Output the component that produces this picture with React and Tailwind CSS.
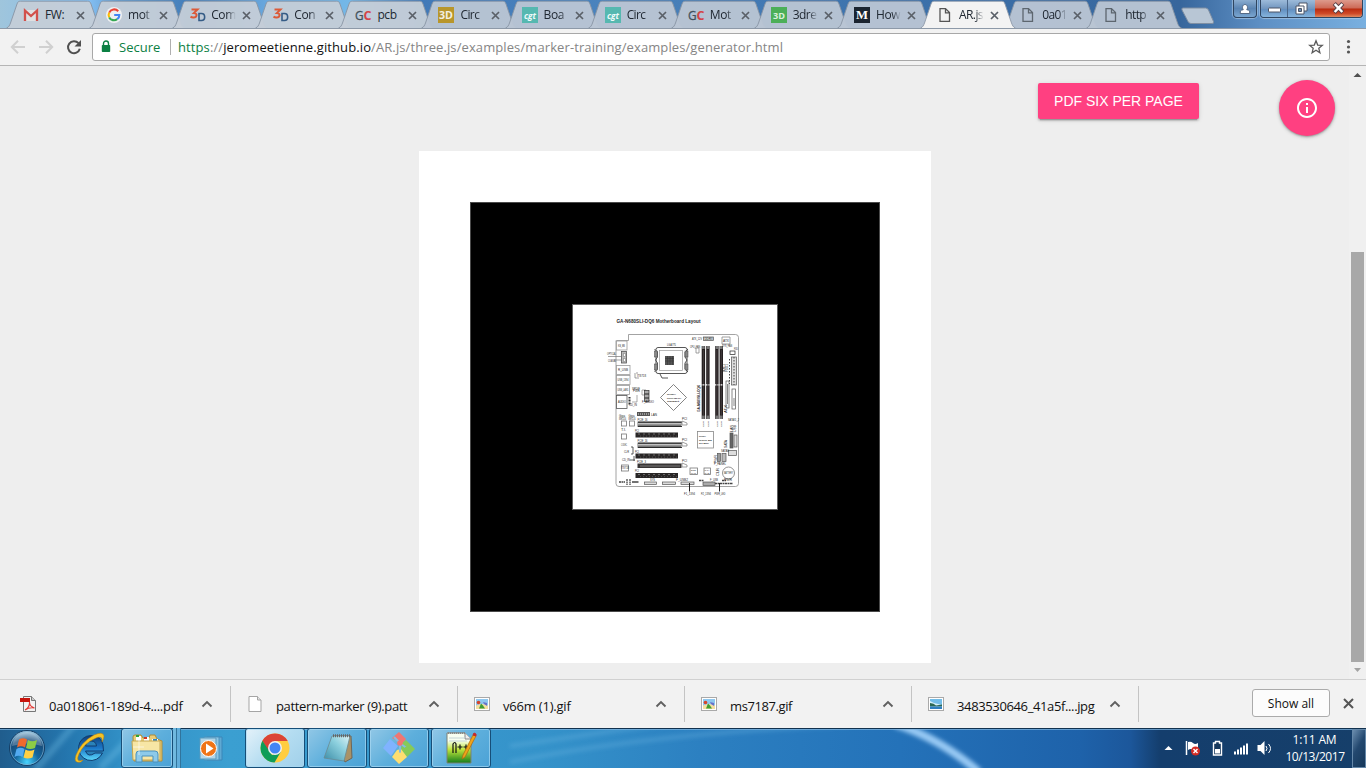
import React from "react";

const ui = "font-['Open_Sans','Noto_Sans',sans-serif]";

const Close = ({ c = "#5a6068" }) => (
  <svg width="9" height="9" viewBox="0 0 9 9" className="shrink-0">
    <path d="M1 1l7 7M8 1l-7 7" stroke={c} strokeWidth="1.7" />
  </svg>
);

const Square = ({ bg, fg, children, size = 10, font = "Open Sans", style, w = 14 }) => (
  <svg width="16" height="16" viewBox="0 0 16 16">
    <rect width="16" height="16" fill={bg} />
    <text x="8" y={size > 11 ? 12.4 : 11.6} textAnchor="middle" fill={fg} fontSize={size} fontWeight="700" fontFamily={font} fontStyle={style} textLength={w} lengthAdjust="spacingAndGlyphs">{children}</text>
  </svg>
);

const Doc = ({ c }) => (
  <svg width="16" height="16" viewBox="0 0 16 16">
    <path d="M3 1.6h5.500l4 4v8.800H3zM8.500 1.800v4h4" fill="none" stroke={c} strokeWidth="1.3" />
  </svg>
);

const Gmail = () => (
  <svg width="16" height="16" viewBox="0 0 16 16">
    <path d="M1 3h14v11H1z" fill="#dfe0e2" />
    <path d="M2 14V3.500l6 5.500 6-5.500V14" fill="none" stroke="#d2504b" strokeWidth="2.3" />
  </svg>
);

const Google = () => (
  <svg width="16" height="16" viewBox="0 0 16 16">
    <circle cx="8" cy="8" r="8" fill="#eef0f2" />
    <path d="M12.2 4.2A5.400 5.400 0 0 0 3.200 5.600" fill="none" stroke="#ea4335" strokeWidth="2.1" />
    <path d="M3.200 5.600a5.400 5.400 0 0 0 0 4.800" fill="none" stroke="#fbbc05" strokeWidth="2.1" />
    <path d="M3.200 10.400a5.400 5.400 0 0 0 8 1.800" fill="none" stroke="#34a853" strokeWidth="2.1" />
    <path d="M11.200 12.200A5 5 0 0 0 13.300 8H8.200" fill="none" stroke="#4285f4" strokeWidth="2.1" />
  </svg>
);

const ThreeD = () => (
  <svg width="17" height="16" viewBox="0 0 17 16">
    <path d="M2.500 2.500h6L4.900 6.100c4 .2 3.200 4.500-.6 4.300-1.200 0-2.200-.3-2.800-.7" fill="none" stroke="#db5a38" strokeWidth="2" />
    <path d="M10 6.500h2.500c4.200 0 4.200 7 0 7H10z" fill="none" stroke="#355c86" strokeWidth="1.600" />
  </svg>
);

const GC = () => (
  <svg width="17" height="16" viewBox="0 0 17 16">
    <text x="0" y="12.600" fontSize="12" fontFamily="Open Sans" fontWeight="400" fill="#42515b" stroke="#42515b" strokeWidth=".3" textLength="8.600" lengthAdjust="spacingAndGlyphs">G</text>
    <text x="8.600" y="12.600" fontSize="12" fontFamily="Open Sans" fontWeight="700" fill="#d34448" textLength="8" lengthAdjust="spacingAndGlyphs">C</text>
  </svg>
);

const tabs = [
  ["FW:", <Gmail />],
  ["mot", <Google />],
  ["Com", <ThreeD />],
  ["Con", <ThreeD />],
  ["pcb", <GC />],
  ["Circ", <Square bg="#b8962b" fg="#f3efe0">3D</Square>],
  ["Boa", <Square bg="#56b8b0" fg="#eefafa" style="italic" size={8} w={12}>cgt</Square>],
  ["Circ", <Square bg="#56b8b0" fg="#eefafa" style="italic" size={8} w={12}>cgt</Square>],
  ["Mot", <GC />],
  ["3dre", <Square bg="#4caf58" fg="#d9f0dc" w={12} size={9}>3D</Square>],
  ["How", <Square bg="#1b2430" fg="#ffffff" font="Liberation Serif" size={13} w={12}>M</Square>],
  ["AR.js", <Doc c="#555555" />],
  ["0a01", <Doc c="#5d666f" />],
  ["http", <Doc c="#5d666f" />],
];

function Tab({ label, icon, active, i }) {
  return (
    <div className={`relative h-[28px] w-[83.1px] shrink-0 ${active ? "z-10" : ""}`}>
      <svg className="absolute left-0 top-0" width="98" height="28" viewBox="0 0 98 28">
        <path
          d="M0.5 28C3 27 3.5 25.500 4.500 23L11 4C11.800 1.800 12.500 1.200 14.500 1.200H81.500C83.500 1.200 84.200 1.800 85 4L91.500 23C92.500 25.500 93 27 95.500 28Z"
          fill={active ? "#f3f3f3" : i < 5 ? "#c4cdd7" : "#b9c5d3"}
          fillOpacity={active ? 1 : 0.96}
        />
        <path
          d="M0.5 28C3 27 3.5 25.500 4.500 23L11 4C11.800 1.800 12.500 1.200 14.500 1.200H81.500C83.500 1.200 84.200 1.800 85 4L91.500 23C92.500 25.500 93 27 95.500 28"
          fill="none"
          stroke={active ? "#8d99a8" : "#8894a4"}
          strokeWidth="0.9"
        />
      </svg>
      <div className="relative flex h-[28px] items-center pl-[17px] pt-[2px]">
        <span className="w-[17px] shrink-0">{icon}</span>
        <span className={`${ui} ml-[5px] w-[27px] shrink-0 whitespace-nowrap text-[12px] leading-[18px] text-[#202832] ${label.length > 3 ? "tracking-[-0.6px]" : "tracking-[-0.4px]"} ${i === 0 || i === 4 ? "" : "[mask-image:linear-gradient(90deg,#000_60%,transparent_92%)]"}`}>
          {label}
        </span>
        <span className="ml-[4px] flex">
          <Close />
        </span>
      </div>
    </div>
  );
}

function TabStrip() {
  return (
    <div className="relative flex h-[28px] w-full items-start overflow-hidden bg-[linear-gradient(90deg,#9fc5dc_0,#82bdf0_90px,#5f9bd1_120px,#437db9_190px,#6aa9df_270px,#74b8e8_350px,#4179b8_420px,#4a83bd_600px,#3c71ab_900px,#37669c_1180px,#5d8fc4_1260px,#79b0e0_1366px)]">
      <div className="flex pl-[6px]">
        {tabs.map(([label, icon], i) => (
          <Tab key={i} i={i} label={label} icon={icon} active={i === 11} />
        ))}
      </div>
      <svg className="mt-[7px] ml-[11px] shrink-0" width="36" height="18" viewBox="0 0 36 18">
        <path d="M3 1h22.500q2 0 3 2l5 11.500q.8 2-1.500 2H11q-2 0-3-2L2 3Q1.300 1 3 1z" fill="#b8c6d5" stroke="#7f8fa3" />
      </svg>
      <div className="ml-auto mr-[3px] flex gap-[3px]">
        <div className="flex h-[18px] w-[24px] items-center justify-center rounded-b-[4px] border border-t-0 border-[#30455f] bg-[linear-gradient(#8badd0,#5a84b3_50%,#7aa6d0)] shadow-[0_0_1px_1px_#b9d3ec99]">
          <svg width="12" height="12" viewBox="0 0 12 12">
            <path d="M1.300 10.500V8Q2 7 4.300 6.700C2.800 5 3.500 1.500 6 1.500S9.200 5 7.700 6.700Q10 7 10.700 8v2.500z" fill="#fff" stroke="#4c5f7a" strokeWidth=".9" />
          </svg>
        </div>
        <div className="flex h-[18px] overflow-hidden rounded-b-[4px] border border-t-0 border-[#30455f] shadow-[0_0_1px_1px_#b9d3ec99]">
          <div className="flex w-[27px] items-center justify-center border-r border-[#4a6689] bg-[linear-gradient(#9dbbda,#7196bf_50%,#628fc0_55%,#86b4dd)]">
            <svg width="13" height="6" viewBox="0 0 13 6" className="mt-[3px]"><rect x=".5" y="1" width="12" height="4" rx=".8" fill="#fff" stroke="#4c5566" /></svg>
          </div>
          <div className="flex w-[27px] items-center justify-center bg-[linear-gradient(#9dbbda,#7196bf_50%,#628fc0_55%,#86b4dd)]">
            <svg width="13" height="13" viewBox="0 0 13 13">
              <path d="M4 1h8v8H4z" fill="#fff" stroke="#4c5566" /><path d="M1 4h8v8H1z" fill="#fff" stroke="#4c5566" /><path d="M3.500 6.500h3v3h-3z" fill="#6a8fb9" stroke="#4c5566" />
            </svg>
          </div>
          <div className="flex w-[47px] items-center justify-center bg-[linear-gradient(#dd9a8c,#cd6956_48%,#b92b10_52%,#cf4a28_80%,#e08a60)]">
            <svg width="13" height="12" viewBox="0 0 13 12" className="-mt-px">
              <path d="M2.200 1.500l8.600 9M10.800 1.500l-8.600 9" stroke="#5b4349" strokeWidth="4.300" /><path d="M2.700 2l7.600 8M10.300 2l-7.600 8" stroke="#fff" strokeWidth="2.500" />
            </svg>
          </div>
        </div>
      </div>
    </div>
  );
}

function Toolbar() {
  return (
    <div className="flex h-[38px] w-full items-center border-b border-[#b5b5b5] border-t border-t-[#8d99a8] bg-[#f2f2f2]">
      <svg width="92" height="36" viewBox="0 0 92 36" className="shrink-0">
        <g fill="none" stroke="#d0d0d0" strokeWidth="2">
          <path d="M25 18H12.500M18 11.800L11.800 18l6.200 6.200M39 18h12.500M46 11.800l6.200 6.200-6.200 6.200" />
        </g>
        <path d="M78.500 14.200A6 6 0 1 0 79.800 19.800" fill="none" stroke="#505050" strokeWidth="2" />
        <path d="M81 11v6.500h-6.500z" fill="#505050" />
      </svg>
      <div className={`${ui} flex h-[28px] w-[1238px] items-center rounded-[3px] border border-[#a8a8a8] bg-white text-[13px] leading-[18px]`}>
        <svg width="10" height="13" viewBox="0 0 10 13" className="ml-[8px] mb-[1px]">
          <path d="M2.500 6V3.500a2.500 2.500 0 0 1 5 0V6" fill="none" stroke="#0b8043" strokeWidth="1.400" /><rect x=".8" y="5" width="8.400" height="7" rx=".8" fill="#0b8043" />
        </svg>
        <span className="ml-[8px] w-[42px] whitespace-nowrap tracking-[0px] text-[#0b8043]">Secure</span>
        <span className="ml-[9px] h-[16px] w-px bg-[#b0b0b0]" />
        <span className="ml-[7px] whitespace-nowrap tracking-[0.1px] text-[#858585]">
          <span className="text-[#0b8043]">https</span>://<span className="text-[#111111]">jeromeetienne.github.io</span>/AR.js/three.js/examples/marker-training/examples/generator.html
        </span>
        <svg width="16" height="16" viewBox="0 0 16 16" className="ml-auto mr-[5px]">
          <path d="M8 1.800l1.700 4.300 4.600.3-3.500 2.900 1.100 4.500L8 11.300l-3.900 2.500 1.100-4.500L1.700 6.400l4.600-.3z" fill="none" stroke="#5a5a5a" strokeWidth="1.300" />
        </svg>
      </div>
      <svg width="36" height="20" viewBox="0 0 36 20"><g fill="#555"><circle cx="18.500" cy="4.500" r="1.600" /><circle cx="18.500" cy="10" r="1.600" /><circle cx="18.500" cy="15" r="1.600" /></g></svg>
    </div>
  );
}

const T = ({ x, y, w, children, s = 2.6, r, b }) => (
  <text x={x} y={y} fontSize={s} textLength={w} lengthAdjust="spacingAndGlyphs" fontFamily="Liberation Sans" fontWeight={b ? 700 : 400} fill="#222" transform={r ? `rotate(-90 ${x} ${y})` : undefined}>{children}</text>
);

function Board() {
  return (
    <svg width="206" height="206" viewBox="572 304 206 206" className="block bg-white">
      <rect x="572.500" y="304.500" width="205" height="205" fill="#fff" stroke="#5c5c5c" />
      <T x={616.500} y={323} w={84} s={5.200} b>GA-N680SLI-DQ6 Motherboard Layout</T>
      <path d="M616.500 340.500h12v-6h107q3 0 3 3v146q0 3-3 3H619q-3 0-3-3V340.500" fill="none" stroke="#8c8c8c" strokeWidth=".8" />
      <g fill="#fff" stroke="#999" strokeWidth=".8">
        <rect x="616.500" y="341" width="10.500" height="9" />
        <rect x="616.500" y="365.500" width="13.500" height="9" /><rect x="616.500" y="375.500" width="13.500" height="9" />
        <rect x="616.500" y="385.500" width="13" height="9" /><rect x="616.500" y="395.500" width="10.500" height="13" stroke="#555" />
        <rect x="621.500" y="351.500" width="5" height="11.500" fill="#bbb" stroke="#555" />
        <rect x="623.500" y="353.500" width="2" height="3" /><rect x="623.500" y="358.500" width="2" height="3" />
      </g>
      <T x={618} y={346.500} w={7}>KB_MS</T><T x={607} y={355} w={9}>OPTICAL</T><T x={608} y={362} w={8}>COAXIAL</T>
      <T x={618} y={371} w={10}>R_USB</T><T x={617.500} y={381} w={11}>USB_1394</T><T x={617.500} y={391} w={11}>USB_LAN1</T><T x={618} y={403} w={8}>AUDIO</T>
      <path d="M608 356.500h13M614 360h7M635 373v5h4M636 373h2" stroke="#777" strokeWidth=".7" fill="none" />
      <T x={637} y={377} w={9}>IT8718</T>
      <g fill="none" stroke="#444" strokeWidth=".9">
        <rect x="656" y="347.500" width="31" height="26" rx="2" /><rect x="659.500" y="350.500" width="23" height="20" stroke="#999" strokeWidth=".7" />
        <path d="M654.500 349l3 3v5l-2 3 2 3v6l-3 3M688 349l-3 3v5l2 3-2 3v6l3 3M660 374l2 4h6" />
      </g>
      <g fill="#888" stroke="#444" strokeWidth=".5"><rect x="654.500" y="351" width="3" height="6" /><rect x="654.500" y="364" width="3" height="6" /><rect x="685" y="351" width="3" height="6" /><rect x="685" y="364" width="3" height="6" /></g>
      <rect x="665" y="356" width="9" height="9" fill="#555" /><path d="M665 358.500h9M665 361h9M667.500 356v9M670 356v9M672.500 356v9" stroke="#333" strokeWidth=".5" />
      <T x={667} y={346} w={9}>LGA775</T><T x={692} y={339.500} w={10}>ATX_12V</T><rect x="703.500" y="337" width="10" height="3.500" fill="#ddd" stroke="#555" strokeWidth=".7" />
      <T x={704.500} y={340} w={8}>DDRII</T><T x={690} y={347.500} w={10}>CPU_FAN</T>
      <path d="M696 348v5h3v-5h-4M722 337h8v7h-8z" fill="none" stroke="#888" strokeWidth=".8" />
      <T x={723} y={341.500} w={6}>ATX</T><T x={734} y={350} w={4}>FDD</T>
      {[701.7, 706.2, 715.2, 719.6].map((x) => (
        <g key={x}>
          <rect x={x} y="346" width="3.400" height="73" fill="#241f20" />
          <path d={`M${x + 1.700} 350v65`} stroke="#665f60" strokeWidth=".5" />
          <path d={`M${x - .2} 384.800h3.800`} stroke="#fff" strokeWidth="1.200" strokeDasharray="1 .6" />
          <rect x={x + .4} y="346" width="2.600" height="3" fill="#777" /><rect x={x + .4} y="415.500" width="2.600" height="3.500" fill="#777" />
          <T x={x + 2.500} y={427} w={6} s={2.500} r>DDR</T>
        </g>
      ))}
      <T x={699.500} y={412} w={27} s={4.200} r b>GA-N680SLI-DQ6</T>
      <path d="M660.500 397.500L673.500 384.500 686.500 397.500 673.500 410.500z" fill="#fff" stroke="#666" strokeWidth=".8" />
      <T x={667} y={395} w={9} b s={2.200}>NVIDIA</T><T x={667} y={398.800} w={14} b s={2.200}>nForce 680i SLI</T><T x={667} y={402} w={12} b s={2.200}>Chipset</T>
      <rect x="697.500" y="431.500" width="16" height="16.500" fill="#fff" stroke="#888" strokeWidth=".8" />
      <T x={699} y={437} w={7} b s={2.200}>NVIDIA</T><T x={699} y={440.500} w={13} b s={2.200}>nForce 590</T><T x={699} y={444} w={10} b s={2.200}>SLI MCP</T>
      <T x={633} y={392} w={7}>PWR</T><path d="M632 402h5v-7M642 390h4v5h-4z" fill="none" stroke="#888" strokeWidth=".7" />
      <rect x="644.500" y="390.500" width="4.500" height="11" fill="#aaa" stroke="#333" strokeWidth=".7" /><path d="M644.500 394h4.500M644.500 398h4.500" stroke="#222" />
      <T x={642} y={403} w={12}>F_AUDIO</T><T x={632} y={390} w={8}>SPDIF</T><path d="M629.500 397v8" stroke="#333" strokeWidth="2" strokeDasharray="1 .5" /><T x={629} y={406} w={8}>CD_IN</T>
      <rect x="637" y="412" width="13" height="4" fill="#555" /><path d="M638 414h11" stroke="#ddd" strokeDasharray="1 1" /><T x={651} y={415.500} w={6}>LAN</T>
      {[420, 441].map((y) => (
        <g key={y}>
          <T x={637.500} y={y + .8} w={10}>PCIE_16</T>
          <rect x="637.500" y={y + 1.500} width="44" height="5.500" fill="#777" /><path d={`M638 ${y + 3.800}h43`} stroke="#e2e2e2" strokeWidth="1" /><path d={`M638 ${y + 2.200}h44M638 ${y + 6.500}h44`} stroke="#222" strokeWidth=".9" />
          <path d={`M682 ${y + 1}l5 2v2h-5z`} fill="none" stroke="#777" strokeWidth=".7" /><T x={682} y={y} w={5}>PCI</T>
        </g>
      ))}
      {[432.500, 453.500, 473].map((y) => (
        <g key={y}><T x={635} y={y - 1} w={4}>PCI</T><rect x="635.500" y={y} width="42.500" height="5" fill="#292626" /><path d={`M638 ${y + 1.500}h39`} stroke="#999" strokeWidth=".6" strokeDasharray="2 3" /><path d={`M640 ${y + 3.600}h37`} stroke="#777" strokeWidth=".5" strokeDasharray="1 2" /></g>
      ))}
      <rect x="637.500" y="463.500" width="44" height="4.500" fill="#383535" /><path d="M640 466h40" stroke="#aaa" strokeWidth=".6" /><path d="M682 463l5 2v2h-5z" fill="none" stroke="#777" strokeWidth=".7" />
      <T x={637} y={462.500} w={9}>PCIE_3</T><T x={682} y={462} w={5}>PCI</T>
      <g fill="#fff" stroke="#777" strokeWidth=".8"><rect x="621.500" y="421" width="5" height="5" /><rect x="629.500" y="421" width="5" height="5" /><rect x="621.500" y="434" width="5" height="5" /><rect x="621.500" y="465" width="7" height="6" /><rect x="690" y="468" width="7.500" height="6.500" /><rect x="704" y="468" width="6.500" height="6.500" /><circle cx="728.500" cy="473" r="6" /></g>
      <T x={619} y={417} w={6}>Giga</T><T x={619} y={419.700} w={7}>88E1116</T><T x={628.500} y={417} w={6}>Giga</T><T x={628.500} y={419.700} w={7}>88E1116</T>
      <T x={621} y={431} w={5}>T.I.</T><T x={621} y={446} w={6}>CODEC</T><T x={624} y={453} w={5}>CLR</T><T x={622} y={461} w={8}>CD_IN</T><T x={621} y={469} w={8}>IT8718</T>
      <path d="M631 447h2v7h-2M630 460h5M634 456v5" stroke="#333" strokeWidth=".8" fill="none" />
      <T x={691} y={471} w={5} s={2}>BIOS</T><T x={691} y={473.800} w={5} s={2}>MAIN</T><T x={704.500} y={471} w={5} s={2}>SATA</T><T x={704.500} y={473.800} w={5} s={2}>RAID</T><T x={724} y={474} w={9}>BATTERY</T>
      <g fill="#ddd" stroke="#555" strokeWidth=".7">
        <rect x="731.500" y="357" width="5" height="28" /><rect x="726" y="381" width="3" height="27" fill="#fff" /><rect x="732" y="389" width="3.500" height="20" fill="#fff" />
        <rect x="730" y="351" width="5" height="3.500" fill="#fff" stroke="#222" /><rect x="730" y="433" width="3" height="15" fill="#666" /><rect x="734" y="435" width="3" height="12" />
        <rect x="728.500" y="450.500" width="8" height="5" /><rect x="717.500" y="453.500" width="3" height="8" fill="#999" /><rect x="722" y="453.500" width="4" height="8" fill="#bbb" />
        <rect x="644.500" y="482" width="12" height="2.500" /><rect x="662.500" y="482" width="13" height="2.500" /><rect x="681" y="482" width="13" height="2.500" /><rect x="703" y="482" width="12" height="3.500" fill="#aaa" />
      </g>
      <path d="M729.500 359v25M734 357v28" stroke="#444" strokeWidth="1" strokeDasharray="1.500 1.500" />
      <path d="M727.500 384v20M734 398v8" stroke="#555" strokeWidth=".7" />
      <g><T x={725} y={372} w={8} r>IDE1</T><T x={728} y={372} w={8} r>FDD1</T><T x={727} y={413} w={8} r>ATX</T><T x={727} y={448} w={8} r>SATA</T><T x={736} y={432} w={7} r>USB</T><T x={733} y={432} w={7} r>LAN</T><T x={717} y={463} w={8} r>PWR</T><T x={719} y={476} w={8} r>CLR</T></g>
      <T x={721} y={452} w={8}>SATAII</T><T x={728} y={421} w={11}>SATAII1_2</T><T x={722} y={347} w={10}>SYS_FAN</T><T x={714} y={465} w={12}>F_PANEL</T>
      <path d="M619 482h6M632 482h6M627 479v6M630 479v6M634 482h5M699 480.500h5M715 483.500h18M722 480.500h4" stroke="#444" strokeWidth="1.300" strokeDasharray="2 .5" />
      <T x={676} y={481} w={12}>F_USB2</T><T x={710} y={481} w={8}>F_USB</T><T x={650} y={480.500} w={5}>SYS</T><T x={724} y={481} w={8}>PWR</T>
      <path d="M689.500 483v8.500M719.500 483v8.500" stroke="#222" strokeWidth="1" />
      <T x={684} y={494.500} w={11}>F1_1394</T><T x={701} y={494.500} w={10}>F2_1394</T><T x={714.500} y={494.500} w={11}>PWR_LED</T>
    </svg>
  );
}

function Content() {
  return (
    <div className="flex h-[613px] w-full bg-[#eeeeee]">
      <div className="flex w-[419px] shrink-0" />
      <div className="mt-[85px] flex h-[512px] w-[512px] shrink-0 items-center justify-center bg-white">
        <div className="flex h-[410px] w-[410px] items-center justify-center border border-[#4a4a4a] bg-black">
          <Board />
        </div>
      </div>
      <div className="flex flex-1 items-start">
        <button className="ml-[107px] mt-[17px] h-[36px] w-[161px] rounded-[2px] bg-[#ff4081] font-['Liberation_Sans',sans-serif] text-[14px] leading-[36px] text-white shadow-[0_2px_2px_0_rgba(0,0,0,.14),0_3px_1px_-2px_rgba(0,0,0,.2),0_1px_5px_0_rgba(0,0,0,.12)]">PDF SIX PER PAGE</button>
        <button className="ml-[80px] mt-[14px] flex h-[56px] w-[56px] items-center justify-center rounded-full bg-[#ff4081] shadow-[0_1px_2px_rgba(0,0,0,.25),0_1px_4px_rgba(0,0,0,.2)]">
          <svg width="24" height="24" viewBox="0 0 24 24" fill="#fff"><path d="M11 17h2v-6h-2v6zm1-15C6.480 2 2 6.480 2 12s4.480 10 10 10 10-4.480 10-10S17.520 2 12 2zm0 18c-4.410 0-8-3.590-8-8s3.590-8 8-8 8 3.590 8 8-3.590 8-8 8zM11 9h2V7h-2v2z" /></svg>
        </button>
      </div>
      <div className="flex h-full w-[17px] shrink-0 flex-col items-center bg-[#f0f0f0]">
        <svg width="17" height="17" viewBox="0 0 17 17"><path d="M4.500 11L8.500 7l4 4z" fill="#505050" /></svg>
        <div className="mt-[169px] h-[410px] w-[13px] bg-[#a8a8a8]" />
        <svg width="17" height="17" viewBox="0 0 17 17"><path d="M5 6l3.500 4L12 6z" fill="#a3a3a3" /></svg>
      </div>
    </div>
  );
}

const GifIcon = () => (
  <svg width="16" height="16" viewBox="0 0 16 16"><rect x=".5" y="1.500" width="15" height="13" fill="#fff" stroke="#a9a9a9" /><rect x="2" y="3" width="12" height="10" fill="#8ec7ef" /><path d="M2 9.500q6-3 12 0V13H2z" fill="#f5dfa0" /><path d="M5 12.500l2-5 2 2 2 3z" fill="#3f9d32" /><circle cx="4.500" cy="6.500" r="1.800" fill="#d6452a" /><path d="M9 6l4 1v3l-3-2z" fill="#6a70c8" /></svg>
);
const JpgIcon = () => (
  <svg width="16" height="16" viewBox="0 0 16 16"><rect x=".5" y="1.500" width="15" height="13" fill="#fff" stroke="#a9a9a9" /><rect x="2" y="3" width="12" height="10" fill="#72bde8" /><path d="M2 5l4 2 8 2v2H2z" fill="#d6f0fa" /><path d="M2 7q4 0 6 2.500l6-1v2H2z" fill="#2c6853" /><path d="M2 10.500h12V13H2z" fill="#2f7fc0" /></svg>
);
const PdfIcon = () => (
  <svg width="16" height="16" viewBox="0 0 16 16"><path d="M3.500.5h8l4 4v11h-12z" fill="#f2f2f2" stroke="#777" /><path d="M11.500.5v4h4" fill="#ccc" stroke="#777" /><path d="M0 2h10v4H0z" fill="#c8140c" /><path d="M5 14q5-3 4.500-8 0 4.500 5 6-5-1-9.500 2" fill="none" stroke="#e23a35" strokeWidth="1.100" /></svg>
);
const FileIcon = () => (
  <svg width="16" height="16" viewBox="0 0 16 16"><path d="M2 .5h8.500l3.500 3.500v11.500H2z" fill="#fff" stroke="#a5a5a5" /><path d="M10.500.5V4H14" fill="#e4e4e4" stroke="#a5a5a5" /></svg>
);

const downloads = [
  ["0a018061-189d-4....pdf", <PdfIcon />, "w-[134px]", "tracking-[-0.26px]"],
  ["pattern-marker (9).patt", <FileIcon />, "w-[132px]", "tracking-[-0.36px]"],
  ["v66m (1).gif", <GifIcon />, "w-[69px]", "tracking-[-0.2px]"],
  ["ms7187.gif", <GifIcon />, "w-[63px]", "tracking-[-0.4px]"],
  ["3483530646_41a5f....jpg", <JpgIcon />, "w-[138px]", "tracking-[-0.37px]"],
];

function Downloads() {
  return (
    <div className={`${ui} flex h-[49px] w-full border-t border-[#d0d0d0] bg-[#f2f2f2] pt-[6px]`}>
      <div className="flex pl-[4px]">
        {downloads.map(([name, icon, w, track]) => (
          <div key={name} className="flex h-[36px] w-[227px] items-center border-r border-[#c4c4c4] pl-[16px]">
            <span className="mb-px flex w-[16px]">{icon}</span>
            <span className={`ml-[13px] whitespace-nowrap pt-[3px] text-[13px] leading-[18px] text-[#111] ${w} ${track}`}>{name}</span>
            <svg width="12" height="8" viewBox="0 0 12 8" className="ml-auto mr-[17px]"><path d="M1.500 6.500L6 2l4.500 4.500" fill="none" stroke="#606060" strokeWidth="1.900" /></svg>
          </div>
        ))}
      </div>
      <button className="ml-auto mt-[3px] h-[28px] w-[78px] rounded-[3px] border border-[#ababab] bg-[#fcfcfc] text-[12px] leading-[25px] text-[#111]">Show all</button>
      <svg width="11" height="11" viewBox="0 0 11 11" className="ml-[13px] mr-[12px] mt-[12px]"><path d="M1 1l9 9M10 1l-9 9" stroke="#555" strokeWidth="2" /></svg>
    </div>
  );
}

const Orb = () => (
  <svg width="38" height="38" viewBox="0 0 38 38">
    <defs><radialGradient id="orb" cx=".5" cy=".9" r=".85"><stop offset="0" stopColor="#46d4ff" /><stop offset=".4" stopColor="#14679f" /><stop offset=".75" stopColor="#174b79" /><stop offset="1" stopColor="#8ebad5" /></radialGradient></defs>
    <circle cx="19" cy="19" r="17.500" fill="url(#orb)" stroke="#153e65" /><circle cx="19" cy="19" r="16.500" fill="none" stroke="#8bbbd9" strokeOpacity=".6" />
    <path d="M4 17Q6 4 19 3q13 1 15 14-15-5-30 0z" fill="#fff" fillOpacity=".25" />
    <path d="M11 10.500q4-2.500 8 0l-2 8q-4-2.500-8 0z" fill="#ef6a2d" /><path d="M20 11q4 2.500 9 0l-2 8q-5 2-9 0z" fill="#8dcc45" />
    <path d="M8.500 20q4-2.500 8 0l-2 8q-4-2.500-8 0z" fill="#53aaf0" /><path d="M17.500 20.500q4 2.500 9 0l-2 8q-5 2-9 0z" fill="#ffd044" />
  </svg>
);
const IE = () => (
  <svg width="34" height="32" viewBox="0 0 34 32">
    <defs><linearGradient id="ie" x2="0" y2="1"><stop stopColor="#113f77" /><stop offset=".5" stopColor="#1b77c8" /><stop offset="1" stopColor="#5cd8fb" /></linearGradient></defs>
    <path d="M18 3.500a12.500 12.500 0 1 0 11.500 17.500h-7.500q-7 5-9.500-2H30.500Q31 3.500 18 3.500zm-5.500 10.500q1-5 5.500-5 5 0 5.500 5z" fill="url(#ie)" stroke="#103d70" />
    <path d="M8 30Q0 32 3 23 8 10 21 3q9-4 10 1 0 3-2 6 1-7-6-4Q11 11 6 22q-4 9 4 6z" fill="#f6c324" stroke="#b77d10" strokeWidth=".5" />
  </svg>
);
const Explorer = () => (
  <svg width="34" height="32" viewBox="0 0 34 32">
    <path d="M3 5q0-2 2-2h6l2 3h6l1-3h5l2 4 5 2v20H4z" fill="#e9cd79" stroke="#ad8c38" /><path d="M6 4h5v5H6zM14 5h5v5h-5zM22 7h6v4h-6z" fill="#fff" /><path d="M6 3h3v2H6z" fill="#2aa338" /><path d="M14 5h3v2h-3z" fill="#d13624" /><path d="M23 7h4v2h-4z" fill="#2c87c9" />
    <path d="M2 9h28v19H3z" fill="#f7e6a5" stroke="#c5a650" /><path d="M6 30v-8q0-3 3-3h16q3 0 3 3v8h-5v-6H12v6z" fill="#8dcaea" stroke="#4b91bd" /><path d="M9 8v15M3 15h11" stroke="#fff" strokeOpacity=".6" />
  </svg>
);
const Media = () => (
  <svg width="28" height="27" viewBox="0 0 28 27"><path d="M9 2h15v23H9z" fill="#5fa9d3" stroke="#3b86b8" /><path d="M6 2h15v23H6z" fill="#8cc6e6" stroke="#4b92bd" /><path d="M2 3h16v21H2z" fill="#b3d6e8" stroke="#5799be" /><circle cx="10.500" cy="13.500" r="8" fill="#ef7417" stroke="#fff" /><path d="M8 8.500v10l7.500-5z" fill="#fff" /></svg>
);
const Chrome = () => (
  <svg width="30" height="30" viewBox="0 0 30 30"><circle cx="15" cy="15" r="14.500" fill="#ffcd40" /><path d="M15 .5A14.500 14.500 0 0 0 2.400 7.800L8.500 18.500 15 8h12.700A14.500 14.500 0 0 0 15 .5z" fill="#db4437" /><path d="M2.400 7.800A14.500 14.500 0 0 0 14.500 29.500L21 18.500 12 22z" fill="#0f9d58" /><circle cx="15" cy="15" r="7" fill="#f1f1f1" /><circle cx="15" cy="15" r="5.500" fill="#4285f4" /></svg>
);
const Notepad = () => (
  <svg width="32" height="31" viewBox="0 0 32 31"><defs><linearGradient id="pad" x1="0" y1="1" x2="1" y2="0"><stop stopColor="#3b8ca6" /><stop offset=".6" stopColor="#8cd0de" /><stop offset="1" stopColor="#dff3f5" /></linearGradient></defs><path d="M12 3h18l1 22-7 4z" fill="#a99267" stroke="#6e6657" /><path d="M11 3h18l-6 25-20-3z" fill="url(#pad)" stroke="#6a8a92" strokeWidth=".8" /><path d="M12 2.800h17" stroke="#666" strokeWidth="3" strokeDasharray="1 1" /></svg>
);
const Git = () => (
  <svg width="34" height="34" viewBox="0 0 34 34"><path d="M17 1l7 7-3 4-4-1-7-4z" fill="#f07672" /><path d="M16 15l-8-7-7 9 8 8z" fill="#80b3ff" /><path d="M24 9l9 9-8 8-6-7 1-7z" fill="#86ca59" /><path d="M15 19l4-1 6 8-8 7-7-7z" fill="#ffde71" /><path d="M12 6l6 6v14M19 13l7 5" fill="none" stroke="#83bde2" strokeWidth="2" /><circle cx="18" cy="12" r="2.800" fill="#f07672" /><circle cx="25" cy="18" r="2.500" fill="#86ca59" /><circle cx="18" cy="24" r="2.500" fill="#ffde71" /></svg>
);
const NppIcon = () => (
  <svg width="32" height="34" viewBox="0 0 32 34"><defs><linearGradient id="np" x2="0" y2="1"><stop offset=".25" stopColor="#f8fff1" /><stop offset=".55" stopColor="#bee43c" /><stop offset="1" stopColor="#147c1b" /></linearGradient></defs><path d="M2 2h18l6 6v24H2z" fill="url(#np)" stroke="#7c8176" /><path d="M20 2v6h6" fill="#eee" stroke="#888" /><path d="M3 2h17" stroke="#888" strokeWidth="2" strokeDasharray="1 1" /><path d="M4 7h16M4 10h18" stroke="#c6d5d6" /><path d="M8 22v-9q2-3 3 0v9M12.500 16h5M15 13.500v5M18.500 16h5M21 13.500v5" fill="none" stroke="#111" strokeWidth="1.200" /><path d="M28 4l3 1-11 21-3 2 1-4z" fill="#efa41b" stroke="#ad6610" strokeWidth=".7" /><path d="M28 4l1-2 2 1v2z" fill="#c52b2b" stroke="#c52b2b" /></svg>
);

const TaskBtn = ({ children, active, w }) => (
  <div className={`flex h-[40px] items-center justify-center rounded-[3px] border border-[#164e78] shadow-[inset_0_0_0_1px_#a9d9f3aa] ${w} ${active ? "bg-[linear-gradient(135deg,#e4f2fa,#b5ddf1_50%,#a0d0ea)]" : "bg-[linear-gradient(135deg,#91c7e6,#5eafdc_50%,#4ba2d6)]"}`}>{children}</div>
);

function Taskbar() {
  return (
    <div className="relative flex h-[40px] w-full overflow-hidden bg-[linear-gradient(90deg,#205d8d_0,#2475ad_65px,#318fc5_120px,#3b9fd1_230px,#3593ca_540px,#2c80c1_700px,#2472b9_900px,#1e62aa_1080px,#1c579b_1130px,#143e6d_1160px,#163f6a_1366px)]">
      <svg className="absolute left-0 top-0" width="1366" height="40" viewBox="0 0 1366 40">
        <defs><filter id="soft"><feGaussianBlur stdDeviation="2" /></filter></defs>
        <path d="M895-4q44 14 84 48" fill="none" stroke="#add9ff" strokeWidth="8" strokeOpacity=".85" filter="url(#soft)" />
        <path d="M510 34Q650 5 850-3M510 18Q590 6 660-4" fill="none" stroke="#71b8e2" strokeWidth="4" strokeOpacity=".35" filter="url(#soft)" />
        <path d="M35 42L75-4M100 40L145-5" stroke="#79c6eb" strokeWidth="7" strokeOpacity=".3" filter="url(#soft)" />
        <path d="M0 .5h1366" stroke="#12324f" /><path d="M0 1.500h1366" stroke="#7db3dd" strokeOpacity=".75" />
      </svg>
      <div className="relative flex w-full items-center">
        <div className="ml-[8px] w-[38px]"><Orb /></div>
        <div className="ml-[27px] w-[34px]"><IE /></div>
        <div className="ml-[14px] flex"><TaskBtn w="w-[52px]"><Explorer /></TaskBtn><div className="h-[40px] w-[4px] border-r border-[#31749c] bg-[#70b9df]" /><div className="h-[40px] w-[4px] border-r border-[#31749c] bg-[#61aedb]" /></div>
        <div className="ml-[17px] w-[28px]"><Media /></div>
        <div className="ml-[19px] flex gap-[2px]">
          <TaskBtn w="w-[60px]" active><Chrome /></TaskBtn>
          <TaskBtn w="w-[60px]"><Notepad /></TaskBtn>
          <TaskBtn w="w-[60px]"><Git /></TaskBtn>
          <TaskBtn w="w-[60px]"><NppIcon /></TaskBtn>
        </div>
        <div className="ml-auto flex items-center">
          <svg width="112" height="24" viewBox="1162 737 112 24">
            <path d="M1164.500 751l4-4 4 4z" fill="#fff" />
            <path d="M1186.500 742v14" stroke="#fff" strokeWidth="1.500" /><path d="M1188 743q3-1 5 1t5 0v7q-3 2-5 0t-5 0z" fill="#fff" /><circle cx="1195.500" cy="752" r="4.500" fill="#d22b24" /><path d="M1193.500 750l4 4M1197.500 750l-4 4" stroke="#fff" strokeWidth="1.400" />
            <path d="M1213.500 744h2v-1.500h4v1.500h2v12h-8z" fill="#18395d" stroke="#fff" strokeWidth="1.400" /><path d="M1215 750h5v4.500h-5z" fill="#fff" />
            <path d="M1234 755.500v-3h2v3zM1237 755.500v-5h2v5zM1240 755.500v-7h2v7zM1243 755.500v-9h2v9zM1246 755.500v-11h2v11z" fill="#fff" />
            <path d="M1257.500 746h3l4-4v14l-4-4h-3z" fill="#fff" /><path d="M1266 747q2 2.500 0 5M1268.500 745q4 4.500 0 9" fill="none" stroke="#fff" strokeWidth="1" />
          </svg>
          <div className={`${ui} ml-[10px] mr-[6px] w-[62px] whitespace-nowrap text-center text-[12px] leading-[17px] tracking-[-0.45px] text-white`}>
            <div className="pr-[1px] tracking-[-0.2px]">1:11 AM</div>
            <div>10/13/2017</div>
          </div>
          <div className="h-[39px] w-[14px] border border-[#6588a9] bg-[linear-gradient(120deg,#6b8dae,#23486f_45%,#153759)]" />
        </div>
      </div>
    </div>
  );
}

export default function App() {
  return (
    <div className="flex h-[768px] w-[1366px] flex-col overflow-hidden">
      <TabStrip />
      <Toolbar />
      <Content />
      <Downloads />
      <Taskbar />
    </div>
  );
}
